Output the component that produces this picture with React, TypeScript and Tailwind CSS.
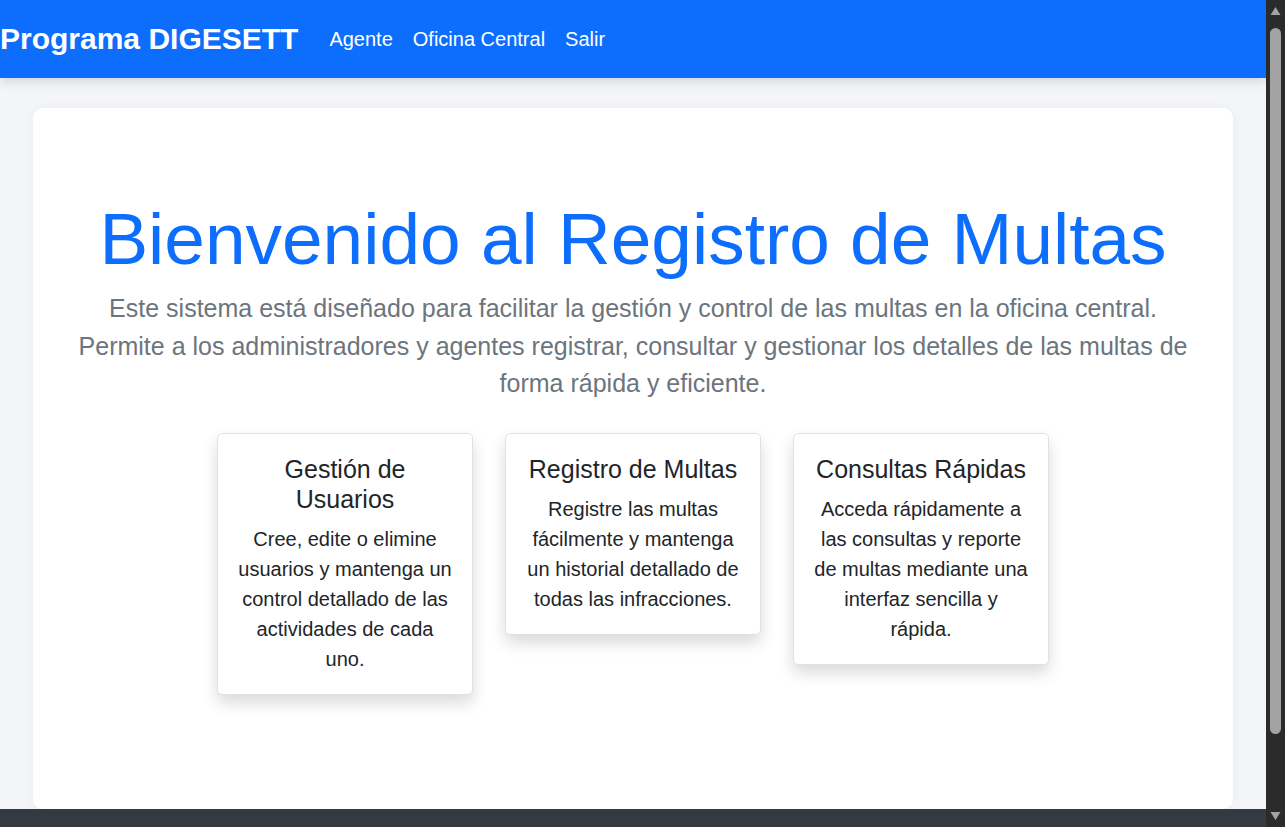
const features = [
  {
    title: "Gestión de Usuarios",
    body: "Cree, edite o elimine usuarios y mantenga un control detallado de las actividades de cada uno.",
  },
  {
    title: "Registro de Multas",
    body: "Registre las multas fácilmente y mantenga un historial detallado de todas las infracciones.",
  },
  {
    title: "Consultas Rápidas",
    body: "Acceda rápidamente a las consultas y reporte de multas mediante una interfaz sencilla y rápida.",
  },
];

function Scrollbar(): React.ReactElement {
  return (
    <div className="fixed right-0 top-0 z-20 flex h-screen w-[19px] flex-col items-center bg-[#2b2b2b] py-[6px]">
      <svg width="11" height="10" viewBox="0 0 11 10" aria-hidden>
        <path d="M5.5 1 L10.5 9 H0.5 Z" fill="#a3a3a3" />
      </svg>
      <div className="mt-[12px] h-[706px] w-[11px] rounded-full bg-[#a3a3a3]" />
      <div className="flex-1" />
      <svg width="11" height="10" viewBox="0 0 11 10" aria-hidden>
        <path d="M0.5 1 H10.5 L5.5 9 Z" fill="#a3a3a3" />
      </svg>
    </div>
  );
}

export default function App(): React.ReactElement {
  return (
    <div className="min-h-screen bg-[#f4f5f9] pr-[19px] font-['Liberation_Sans',Arial,sans-serif] text-[#212529]">
      <nav className="relative z-10 flex h-[78px] items-center bg-[#0d6efd] text-white shadow-[0_4px_10px_rgba(0,0,0,0.12)]">
        <a href="#" className="mr-[31px] text-[30px] font-bold leading-none">
          Programa DIGESETT
        </a>
        <ul className="flex items-center gap-5 text-[20px]">
          <li>
            <a href="#">Agente</a>
          </li>
          <li>
            <a href="#">Oficina Central</a>
          </li>
          <li>
            <a href="#">Salir</a>
          </li>
        </ul>
      </nav>

      <main className="px-[33px] pt-[30px]">
        <section className="mx-auto max-w-[1200px] rounded-[10px] bg-white px-10 pb-[114px] pt-[88px] text-center shadow-[0_0_12px_rgba(0,0,0,0.04)]">
          <h1 className="mb-2 text-[73px] leading-[86px] text-[#0d6efd]">
            Bienvenido al Registro de Multas
          </h1>
          <p className="text-[25px] leading-[37.5px] text-[#6c757d]">
            Este sistema está diseñado para facilitar la gestión y control de las multas en la oficina central.
            <br />
            Permite a los administradores y agentes registrar, consultar y gestionar los detalles de las multas de
            <br />
            forma rápida y eficiente.
          </p>

          <ul className="mt-[30px] flex items-start justify-center gap-8">
            {features.map((f) => (
              <li
                key={f.title}
                className="w-64 rounded-[5px] border border-[#dee2e6] bg-white p-5 shadow-[0_8px_16px_rgba(0,0,0,0.15)]"
              >
                <h2 className="mb-[10px] text-[25px] leading-[30px]">{f.title}</h2>
                <p className="text-[20px] leading-[30px]">{f.body}</p>
              </li>
            ))}
          </ul>
        </section>
      </main>

      <footer className="h-[120px] bg-[#343a40]" />
      <Scrollbar />
    </div>
  );
}
